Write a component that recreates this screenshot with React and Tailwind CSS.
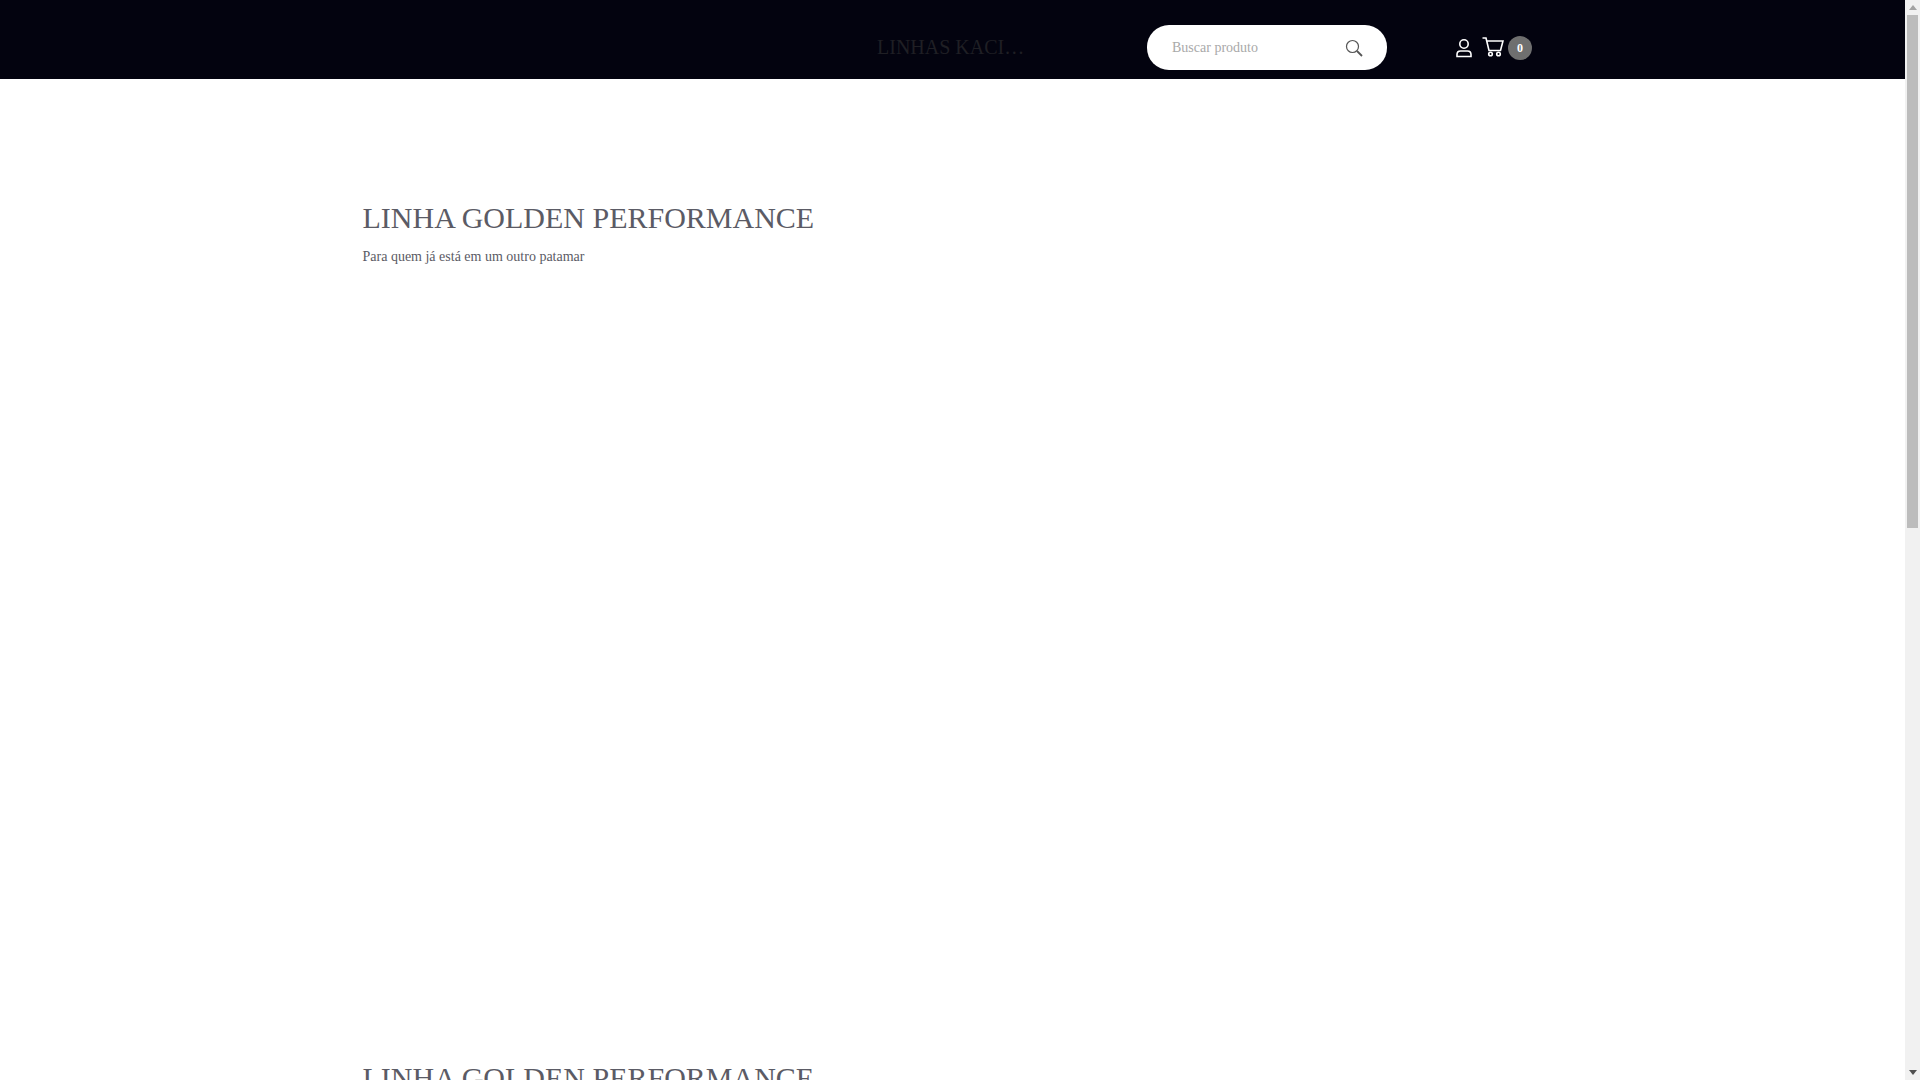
import React from 'react';

function Section() {
  return (
    <section className="h-[860px] pt-[121px]">
      <h2 className="text-[30px] leading-[36px] font-normal text-[#5b5b65]">LINHA GOLDEN PERFORMANCE</h2>
      <p className="mt-[11px] text-[14px] leading-[20px] text-[#5b5b65]">Para quem já está em um outro patamar</p>
    </section>
  );
}

function ScrollBar() {
  return (
    <aside className="flex h-full w-[15px] shrink-0 flex-col items-center bg-[#f1f1f1]">
      <div className="flex h-[15px] w-full items-center justify-center">
        <svg width="8" height="5" viewBox="0 0 8 5" fill="#a3a3a3"><path d="M4 0l4 5H0z" /></svg>
      </div>
      <div className="h-[513px] w-[11px] bg-[#bcbcbc]" />
      <div className="mt-auto flex h-[15px] w-full items-center justify-center">
        <svg width="8" height="5" viewBox="0 0 8 5" fill="#505050"><path d="M0 0h8L4 5z" /></svg>
      </div>
    </aside>
  );
}

function App() {
  return (
    <div className="flex h-screen overflow-hidden bg-white font-['Liberation_Serif',serif]">
      <div className="min-w-0 flex-1 overflow-hidden">
        <header className="h-[79px] bg-[#03030f]">
          <div className="mx-auto flex h-full w-[1181px] items-start">
            <div className="ml-[515px] mt-[34px] w-[148px] truncate text-[20px] leading-[26px] text-[#1f1f24]">LINHAS KACIQUE</div>
            <div className="ml-[122px] mt-[25px] flex h-[45px] w-[240px] items-center justify-between rounded-[22px] bg-white pl-[25px] pr-[24px]">
              <span className="text-[14px] text-[#a9a9a9]">Buscar produto</span>
              <svg width="18" height="18" viewBox="0 0 18 18" fill="none" stroke="#555" strokeWidth="1.2">
                <circle cx="7.500" cy="7.500" r="6" />
                <path d="M12 12l5 5" strokeWidth="1.800" />
              </svg>
            </div>
            <div className="ml-[68px] mt-[36px] flex items-center">
              <svg width="18" height="20" viewBox="0 0 18 20" fill="none" stroke="#fff" strokeWidth="1.600">
                <circle cx="9" cy="6" r="4.200" />
                <path d="M2 18.500v-2c0-2 1.500-3.500 3.500-3.500h7c2 0 3.500 1.500 3.500 3.500v2z" />
              </svg>
              <svg className="ml-[9px] -mt-[2px]" width="22" height="20" viewBox="0 0 22 20" fill="none" stroke="#fff" strokeWidth="1.600">
                <path d="M0.500 1h3.500l3 12.500h11.500l2.500-9.500h-16.500" />
                <circle cx="8.500" cy="17" r="1.800" />
                <circle cx="16.500" cy="17" r="1.800" />
              </svg>
              <span className="ml-[4px] flex h-[24px] w-[24px] items-center justify-center rounded-full bg-[#6f6f6f] text-[12px] font-bold text-white">0</span>
            </div>
          </div>
        </header>
        <main className="pl-[362.5px]">
          <Section />
          <Section />
        </main>
      </div>
      <ScrollBar />
    </div>
  );
}

export default App;
